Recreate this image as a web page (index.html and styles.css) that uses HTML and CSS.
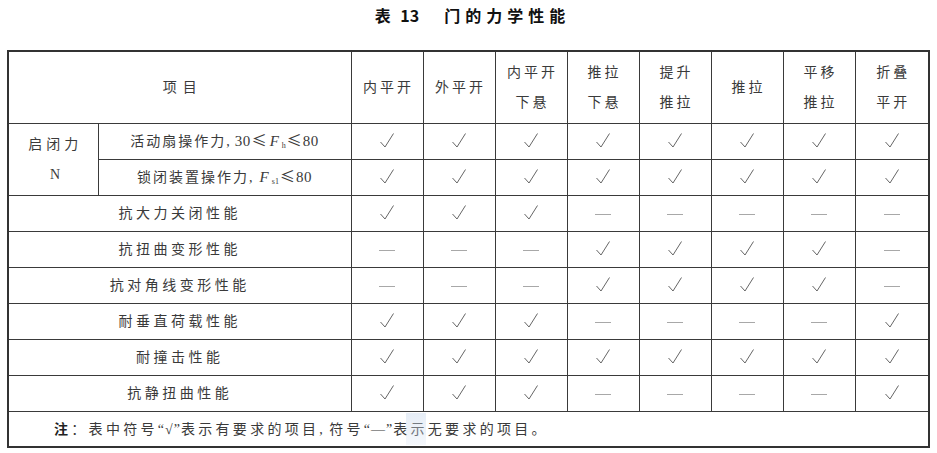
FILE: index.html
```html
<!DOCTYPE html>
<html lang="zh-CN">
<head>
<meta charset="utf-8">
<title>门的力学性能</title>
<link rel="stylesheet" href="styles.css">
</head>
<body>
<h1 class="title"><span class="tno">表 13</span><span class="tname">门的力学性能</span></h1>
<table class="grid">
  <colgroup>
    <col class="c-grp"><col class="c-item">
    <col class="c-v"><col class="c-v"><col class="c-v"><col class="c-v">
    <col class="c-v"><col class="c-v"><col class="c-v"><col class="c-vl">
  </colgroup>
  <thead>
    <tr class="hrow">
      <th colspan="2" class="h-item">项目</th>
      <th>内平开</th>
      <th>外平开</th>
      <th>内平开<br>下悬</th>
      <th>推拉<br>下悬</th>
      <th>提升<br>推拉</th>
      <th>推拉</th>
      <th>平移<br>推拉</th>
      <th>折叠<br>平开</th>
    </tr>
  </thead>
  <tbody id="body">
    <tr>
      <td rowspan="2" class="grp">启闭力<br><span class="lat">N</span></td>
      <td class="item sub">活动扇操作力<span class="cm">,</span><span class="lat">30<span class="le">≤</span><i>F</i><sub>h</sub><span class="le">≤</span>80</span></td>
      <td class="y"></td><td class="y"></td><td class="y"></td><td class="y"></td><td class="y"></td><td class="y"></td><td class="y"></td><td class="y"></td>
    </tr>
    <tr>
      <td class="item sub">锁闭装置操作力<span class="cm">,</span><span class="lat"><i>F</i><sub>s1</sub><span class="le">≤</span>80</span></td>
      <td class="y"></td><td class="y"></td><td class="y"></td><td class="y"></td><td class="y"></td><td class="y"></td><td class="y"></td><td class="y"></td>
    </tr>
    <tr>
      <td colspan="2" class="item">抗大力关闭性能</td>
      <td class="y"></td><td class="y"></td><td class="y"></td><td class="n"></td><td class="n"></td><td class="n"></td><td class="n"></td><td class="n"></td>
    </tr>
    <tr>
      <td colspan="2" class="item">抗扭曲变形性能</td>
      <td class="n"></td><td class="n"></td><td class="n"></td><td class="y"></td><td class="y"></td><td class="y"></td><td class="y"></td><td class="n"></td>
    </tr>
    <tr>
      <td colspan="2" class="item">抗对角线变形性能</td>
      <td class="n"></td><td class="n"></td><td class="n"></td><td class="y"></td><td class="y"></td><td class="y"></td><td class="y"></td><td class="n"></td>
    </tr>
    <tr>
      <td colspan="2" class="item">耐垂直荷载性能</td>
      <td class="y"></td><td class="y"></td><td class="y"></td><td class="n"></td><td class="n"></td><td class="n"></td><td class="n"></td><td class="y"></td>
    </tr>
    <tr>
      <td colspan="2" class="item">耐撞击性能</td>
      <td class="y"></td><td class="y"></td><td class="y"></td><td class="y"></td><td class="y"></td><td class="y"></td><td class="y"></td><td class="y"></td>
    </tr>
    <tr>
      <td colspan="2" class="item">抗静扭曲性能</td>
      <td class="y"></td><td class="y"></td><td class="y"></td><td class="n"></td><td class="n"></td><td class="n"></td><td class="n"></td><td class="y"></td>
    </tr>
    <tr class="note-row">
      <td colspan="10" class="note"><b>注</b>：表中符号<span class="q">“√”</span>表示有要求的项目<span class="cm">,</span>符号<span class="q">“—”</span>表示无要求的项目。<span class="wm"></span></td>
    </tr>
  </tbody>
</table>
<script>
  var CK = '<svg class="ck" width="14" height="15" viewBox="0 0 14 15"><polyline points="0.5,9 5,14 13.5,0.5" fill="none" stroke="#666" stroke-width="1"/></svg>';
  var DS = '<span class="ds"></span>';
  document.querySelectorAll('td.y').forEach(function(td){ td.innerHTML = CK; });
  document.querySelectorAll('td.n').forEach(function(td){ td.innerHTML = DS; });
</script>
</body>
</html>
```
FILE: styles.css
```css
html, body {
  margin: 0;
  padding: 0;
  background: #ffffff;
}
body {
  width: 937px;
  height: 453px;
  overflow: hidden;
  color: #3a3a3a;
  font-family: "Liberation Serif", "Noto Sans CJK SC", serif;
}
.title {
  margin: 0;
  height: 50px;
  padding-top: 5px;
  box-sizing: border-box;
  text-align: center;
  font-family: "Noto Sans CJK SC", "Liberation Sans", sans-serif;
  font-weight: bold;
  font-size: 16px;
  line-height: 20px;
  color: #111;
  padding-left: 8px;
}
.title .tno { margin-right: 25px; word-spacing: 6px; }
.title .tname { letter-spacing: 5px; }
.grid {
  margin-left: 7px;
  border-collapse: collapse;
  table-layout: fixed;
  width: 923px;
  border: 2px solid #333;
  font-size: 14px;
}
.c-grp { width: 90px; }
.c-item { width: 253px; }
.c-v { width: 72px; }
.c-vl { width: 74px; }
.grid th, .grid td {
  border: 1px solid #3a3a3a;
  padding: 0;
  text-align: center;
  vertical-align: middle;
  font-weight: normal;
  height: 35px;
  line-height: 30px;
  letter-spacing: 3.5px;
}
.grid th {
  height: 71px;
  letter-spacing: 3px;
  padding-left: 3px;
}
.grid th.h-item { letter-spacing: 6px; padding-left: 6px; }
.grid td.grp { letter-spacing: 4px; padding-left: 4px; }
.grid td.sub { letter-spacing: 2px; padding-left: 0; line-height: 20px; }
.lat { font-family: "Liberation Serif", serif; letter-spacing: 0.5px; font-size: 15px; }
.grp .lat { font-size: 14px; }
.lat i { font-style: italic; letter-spacing: 0; margin-left: 2px; }
.lat sub { font-size: 8px; line-height: 0; vertical-align: -2px; letter-spacing: 0; margin-left: 3px; }
.le { font-family: "Noto Sans CJK SC", sans-serif; font-size: 15px; line-height: 0; letter-spacing: 0; margin: 0 1px; }
.cm { margin: 0 3px 0 0; }
.item { padding-left: 2px; }
.ck { display: inline-block; vertical-align: middle; margin-top: -4px; }
.ds {
  display: inline-block;
  width: 16px;
  height: 1px;
  background: #a8a8a8;
  vertical-align: middle;
}
.grid tr.note-row td {
  height: 34px;
  text-align: left;
  padding-left: 45px;
  position: relative;
  letter-spacing: 3.3px;
}
.note b { font-family: "Noto Sans CJK SC", sans-serif; font-weight: bold; color: #222; }
.q { letter-spacing: 1px; }
.wm {
  position: absolute;
  left: 397px;
  top: 1px;
  width: 20px;
  height: 32px;
  background: linear-gradient(180deg, rgba(200,215,235,0.45), rgba(220,230,245,0.3));
}
```
